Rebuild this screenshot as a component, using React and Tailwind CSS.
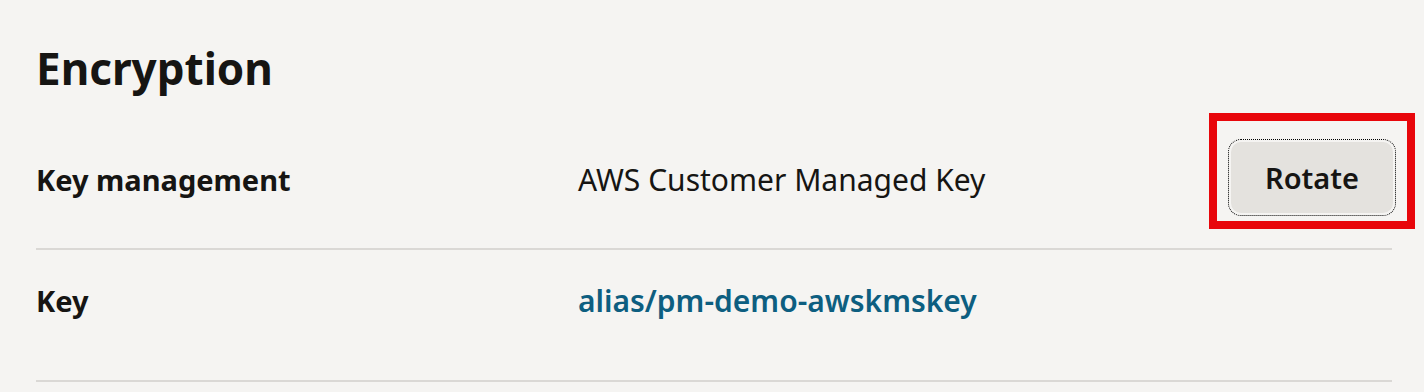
import React from "react";

const font = { fontFamily: '"Noto Sans", "Open Sans", sans-serif' };

function Row({ label, children, action, className, offset = "" }) {
  return (
    <div className={`flex items-start border-b-2 border-[#dad8d5] ${className}`}>
      <div className={`w-[542px] shrink-0 text-[29px] font-bold leading-[40px] text-[#161513] ${offset}`}>
        {label}
      </div>
      <div className={`flex-1 text-[30px] leading-[40px] text-[#161513] ${offset}`}>{children}</div>
      {action}
    </div>
  );
}

export default function App() {
  return (
    <div className="min-h-[392px] w-[1424px] bg-[#f5f4f2] pl-[36px] pr-[32px]" style={font}>
      <h1 className="pt-[42px] text-[44px] font-bold leading-[53px] text-[#161513]">Encryption</h1>

      {/* key management row, with the highlighted Rotate button */}
      <Row
        label="Key management"
        className="pt-[44px] pb-[35px]"
        offset="mt-[21px]"
        action={
          <div className="relative mr-[-1px] pt-[3px]">
            <button className="h-[71px] w-[162px] rounded-[10px] bg-[#e4e2de] text-[29px] font-semibold text-[#161513] outline-1 outline-offset-[2px] outline-dotted outline-black">
              Rotate
            </button>
            {/* annotation box */}
            <div className="pointer-events-none absolute left-[-22px] top-[-26px] h-[116px] w-[206px] border-[8px] border-[#e8060b]" />
          </div>
        }
      >
        AWS Customer Managed Key
      </Row>

      <Row label="Key" className="pt-[31px] pb-[59px]">
        <a href="#" className="font-semibold text-[#0d5e80]">
          alias/pm-demo-awskmskey
        </a>
      </Row>
    </div>
  );
}
